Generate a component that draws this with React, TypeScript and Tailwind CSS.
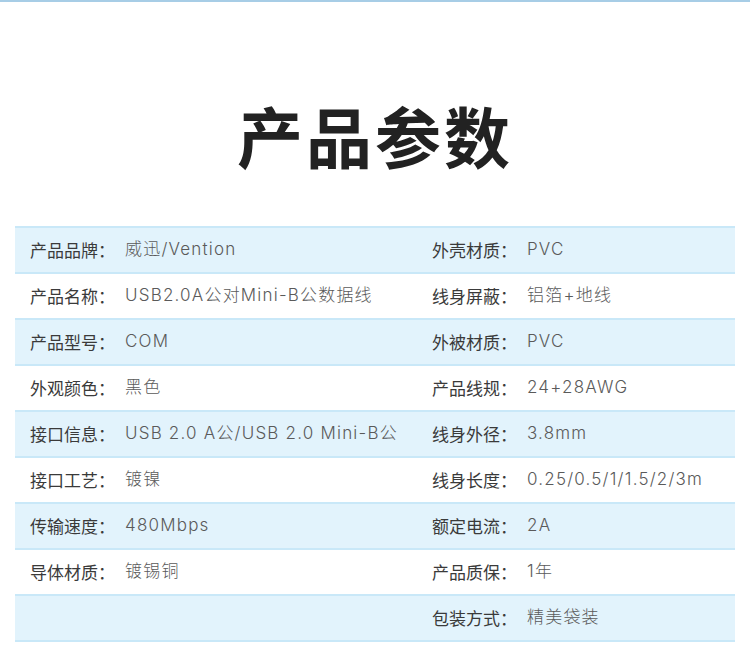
import React from "react";

const rows: [string, string, string, string][] = [
  ["产品品牌：", "威迅/Vention", "外壳材质：", "PVC"],
  ["产品名称：", "USB2.0A公对Mini-B公数据线", "线身屏蔽：", "铝箔+地线"],
  ["产品型号：", "COM", "外被材质：", "PVC"],
  ["外观颜色：", "黑色", "产品线规：", "24+28AWG"],
  ["接口信息：", "USB 2.0 A公/USB 2.0 Mini-B公", "线身外径：", "3.8mm"],
  ["接口工艺：", "镀镍", "线身长度：", "0.25/0.5/1/1.5/2/3m"],
  ["传输速度：", "480Mbps", "额定电流：", "2A"],
  ["导体材质：", "镀锡铜", "产品质保：", "1年"],
  ["", "", "包装方式：", "精美袋装"],
];

function Cell({ label, value }: { label: string; value: string }) {
  return (
    <div className="flex items-center">
      <span className="text-[#3a3a3a] font-normal">{label}</span>
      <span
        className="ml-[10px] text-[#5a5a5a] font-light tracking-[1.2px]"
        style={{ fontFamily: 'Inter, "Noto Sans CJK SC", sans-serif' }}
      >
        {value}
      </span>
    </div>
  );
}

export default function App() {
  return (
    <div
      className="w-[750px] h-[669px] bg-white overflow-hidden"
      style={{ fontFamily: '"Noto Sans CJK SC", "Noto Sans", sans-serif' }}
    >
      <div className="h-[2px] bg-[#a7cde6]" />
      <div className="h-[224px] flex items-center justify-center pt-[40px]">
        <h1 className="text-[66px] font-bold text-[#222] tracking-[3px] leading-none">
          产品参数
        </h1>
      </div>
      <div className="mx-[15px] border-b-2 border-[#c9e8f8]">
        {rows.map((r, i) => (
          <div
            key={i}
            className={`grid grid-cols-[402px_1fr] items-center h-[46px] border-t-2 border-[#c9e8f8] text-[17px] ${
              i % 2 === 0 ? "bg-[#e2f3fc]" : "bg-white"
            }`}
          >
            <div className="pl-[15px]">
              {r[0] ? <Cell label={r[0]} value={r[1]} /> : null}
            </div>
            <div className="pl-[15px]">
              <Cell label={r[2]} value={r[3]} />
            </div>
          </div>
        ))}
      </div>
    </div>
  );
}
